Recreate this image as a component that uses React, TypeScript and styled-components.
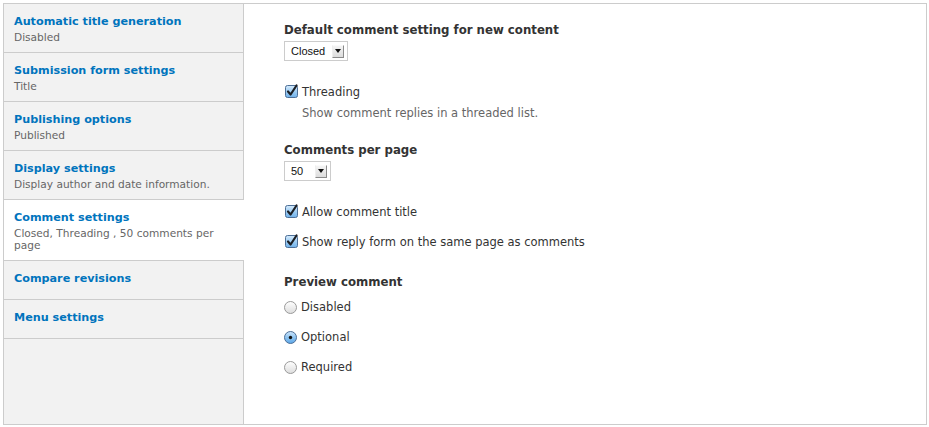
import styled, { createGlobalStyle } from 'styled-components';

const GlobalStyle = createGlobalStyle`
	body {
		margin: 0;
		background: #fff;
		font-family: 'DejaVu Sans', Verdana, sans-serif;
		color: #333;
	}
`;

const tabs = [
	{ title: 'Automatic title generation', summary: 'Disabled' },
	{ title: 'Submission form settings', summary: 'Title' },
	{ title: 'Publishing options', summary: 'Published' },
	{ title: 'Display settings', summary: 'Display author and date information.' },
	{ title: 'Comment settings', summary: 'Closed, Threading , 50 comments per page', active: true },
	{ title: 'Compare revisions' },
	{ title: 'Menu settings' },
];

const Checkbox = (): JSX.Element => (
	<svg width="14" height="14" viewBox="0 0 14 14">
		<defs>
			<linearGradient id="cbFill" x1="0" y1="0" x2="0" y2="1">
				<stop offset="0" stopColor="#d6ebfc" />
				<stop offset="0.5" stopColor="#9fcdf3" />
				<stop offset="1" stopColor="#6fb1ea" />
			</linearGradient>
		</defs>
		<rect x="0.5" y="1.5" width="12" height="12" rx="2" fill="url(#cbFill)" stroke="#4d6f97" />
		<path d="M3 7.5 L5.6 10.5 L11.5 1.5" fill="none" stroke="#1b1f24" strokeWidth="2.2" strokeLinecap="round" strokeLinejoin="round" />
	</svg>
);

const Radio = ({ checked }: { checked?: boolean }): JSX.Element => (
	<svg width="13" height="13" viewBox="0 0 13 13">
		<defs>
			<linearGradient id="rbOff" x1="0" y1="0" x2="0" y2="1">
				<stop offset="0" stopColor="#ffffff" />
				<stop offset="1" stopColor="#dcdcdc" />
			</linearGradient>
			<linearGradient id="rbOn" x1="0" y1="0" x2="0" y2="1">
				<stop offset="0" stopColor="#cfe7fc" />
				<stop offset="0.5" stopColor="#8fc4f0" />
				<stop offset="1" stopColor="#5aa6e8" />
			</linearGradient>
		</defs>
		<circle
			cx="6.5"
			cy="6.5"
			r="6"
			fill={checked ? 'url(#rbOn)' : 'url(#rbOff)'}
			stroke={checked ? '#4d6f97' : '#9a9a9a'}
		/>
		{checked && <circle cx="6.5" cy="6.5" r="1.7" fill="#111" />}
	</svg>
);

const Select = ({ value, width }: { value: string; width: number }): JSX.Element => (
	<SelectBox style={{ width }}>
		<SelectValue>{value}</SelectValue>
		<SelectArrow>
			<svg width="6" height="4" viewBox="0 0 6 4">
				<path d="M0 0 H6 L3 4 Z" fill="#111" />
			</svg>
		</SelectArrow>
	</SelectBox>
);

const App = (): JSX.Element => (
	<>
		<GlobalStyle />
		<Page>
			<Frame>
				<Sidebar>
					{tabs.map((tab) => (
						<Tab key={tab.title} $active={tab.active} $titleOnly={!tab.summary}>
							<TabTitle>{tab.title}</TabTitle>
							{tab.summary && <TabSummary>{tab.summary}</TabSummary>}
						</Tab>
					))}
				</Sidebar>
				<Content>
					<FieldLabel>Default comment setting for new content</FieldLabel>
					<Select value="Closed" width={64} />

					<CheckRow $top={22}>
						<Checkbox />
						Threading
					</CheckRow>
					<Description>Show comment replies in a threaded list.</Description>

					<FieldLabel $top={20}>Comments per page</FieldLabel>
					<Select value="50" width={47} />

					<CheckRow $top={22}>
						<Checkbox />
						Allow comment title
					</CheckRow>
					<CheckRow $top={12}>
						<Checkbox />
						Show reply form on the same page as comments
					</CheckRow>

					<FieldLabel $top={22}>Preview comment</FieldLabel>
					<Radios>
						<RadioRow>
							<Radio />
							Disabled
						</RadioRow>
						<RadioRow>
							<Radio checked />
							Optional
						</RadioRow>
						<RadioRow>
							<Radio />
							Required
						</RadioRow>
					</Radios>
				</Content>
			</Frame>
		</Page>
	</>
);

const Page = styled.div`
	padding: 3px;
`;

const Frame = styled.div`
	display: flex;
	width: 924px;
	height: 422px;
	box-sizing: border-box;
	border: 1px solid #ccc;
`;

const Sidebar = styled.nav`
	width: 240px;
	flex-shrink: 0;
	box-sizing: border-box;
	background: #f2f2f2;
	border-right: 1px solid #ccc;
`;

const Tab = styled.div<{ $active?: boolean; $titleOnly?: boolean }>`
	padding: 9px 10px ${({ $titleOnly }): string => ($titleOnly ? '11px' : '9px')};
	border-bottom: 1px solid #ccc;
	background: ${({ $active }): string => ($active ? '#fff' : 'transparent')};
	margin-right: ${({ $active }): string => ($active ? '-1px' : '0')};
`;

const TabTitle = styled.div`
	font-size: 11.2px;
	font-weight: bold;
	line-height: 18px;
	color: #0074bd;
`;

const TabSummary = styled.div`
	font-size: 10.6px;
	line-height: 12px;
	color: #666;
`;

const Content = styled.main`
	flex: 1;
	padding: 17px 40px 0;
	font-size: 11.5px;
`;

const FieldLabel = styled.div<{ $top?: number }>`
	margin: ${({ $top }): number => $top ?? 0}px 0 2px;
	font-size: 11.75px;
	font-weight: bold;
	line-height: 18px;
	color: #333;
`;

const SelectBox = styled.div`
	display: flex;
	align-items: center;
	justify-content: space-between;
	height: 20px;
	box-sizing: border-box;
	padding: 0 3px 0 6px;
	border: 1px solid #ccc;
	background: #fff;
	font-family: 'Liberation Sans', Arial, sans-serif;
	font-size: 11px;
	color: #111;
`;

const SelectValue = styled.span`
	line-height: 18px;
`;

const SelectArrow = styled.span`
	display: flex;
	align-items: center;
	justify-content: center;
	width: 12px;
	height: 13px;
	box-sizing: border-box;
	background: linear-gradient(#f4f4f4, #dcdcdc);
	border-right: 1px solid #8a8a8a;
	border-bottom: 1px solid #8a8a8a;
	border-left: 1px solid #eee;
	border-top: 1px solid #fafafa;
`;

const CheckRow = styled.label<{ $top?: number }>`
	display: flex;
	align-items: center;
	gap: 3px;
	margin-top: ${({ $top }): number => $top ?? 0}px;
	padding-left: 1px;
	line-height: 18px;
	color: #333;

	svg {
		margin-top: -2px;
	}
`;

const Description = styled.div`
	margin: 4px 0 0 18px;
	line-height: 16px;
	color: #666;
`;

const Radios = styled.div`
	display: flex;
	flex-direction: column;
	gap: 12px;
	margin-top: 7px;
`;

const RadioRow = styled.label`
	display: flex;
	align-items: center;
	gap: 4px;
	line-height: 18px;
	color: #333;
`;

export default App;
